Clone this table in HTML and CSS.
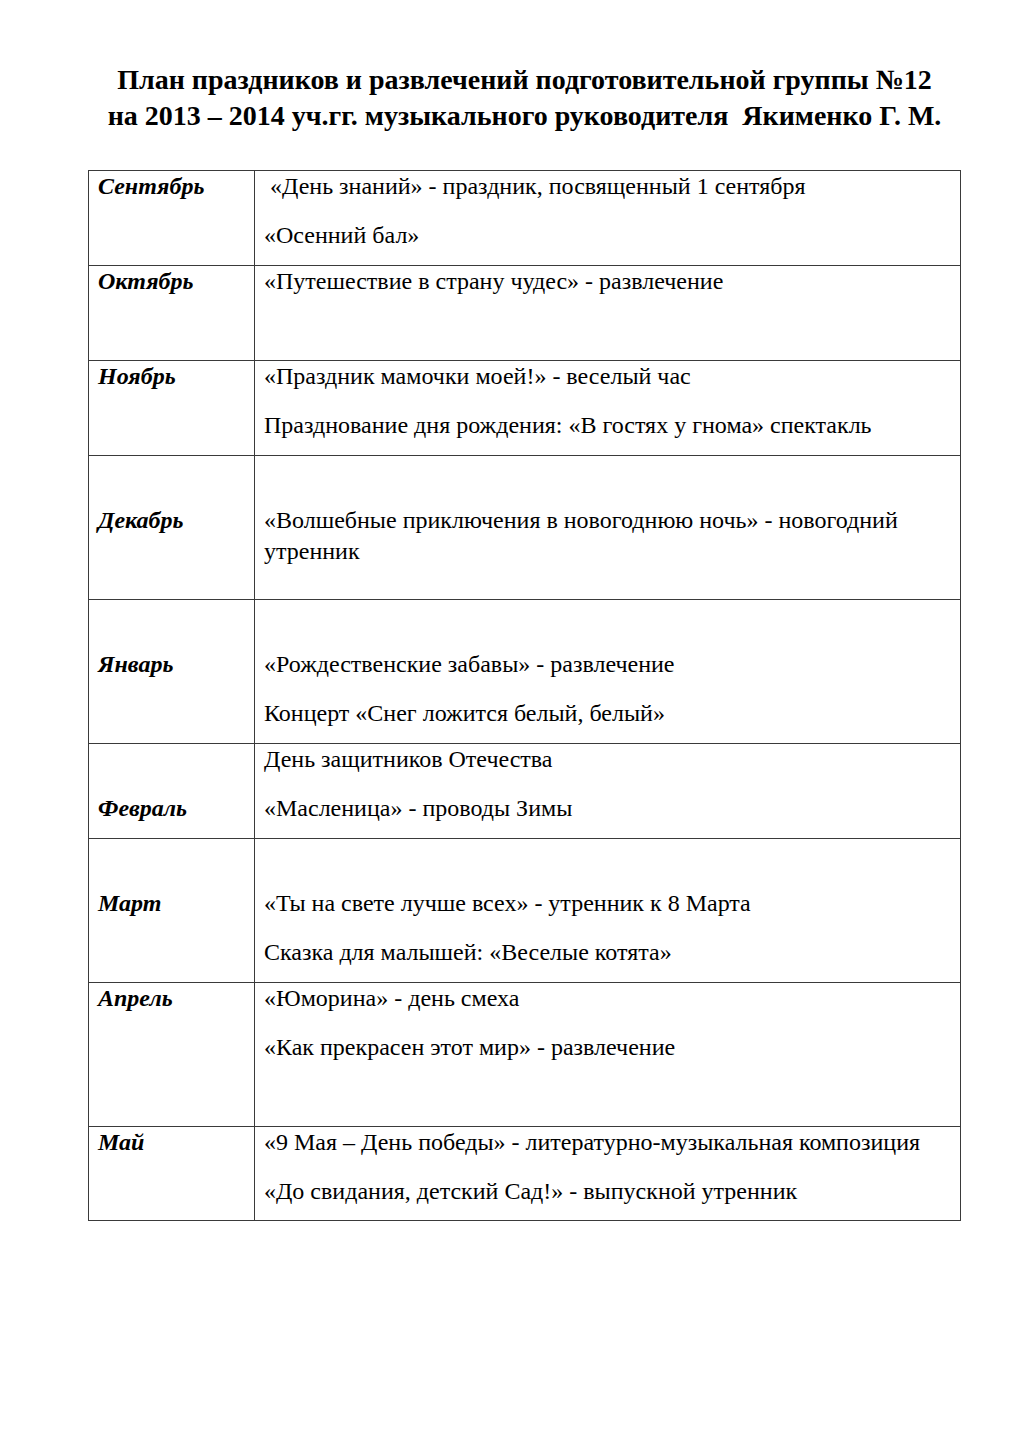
FILE: index.html
```html
<!DOCTYPE html>
<html lang="ru">
<head>
<meta charset="utf-8">
<title>План праздников и развлечений</title>
<link rel="stylesheet" href="styles.css">
</head>
<body>
<div class="page">
  <h1 class="title">
    <span class="tline">План праздников и развлечений подготовительной группы №12</span>
    <span class="tline">на 2013 – 2014 уч.гг. музыкального руководителя &nbsp;Якименко Г. М.</span>
  </h1>
  <div class="plan">
    <div class="row h2">
      <div class="month"><p>Сентябрь</p></div>
      <div class="events"><p>&nbsp;«День знаний» - праздник, посвященный 1 сентября</p><p>«Осенний бал»</p></div>
    </div>
    <div class="row h2">
      <div class="month"><p>Октябрь</p></div>
      <div class="events"><p>«Путешествие в страну чудес» - развлечение</p></div>
    </div>
    <div class="row h2">
      <div class="month"><p>Ноябрь</p></div>
      <div class="events"><p>«Праздник мамочки моей!» - веселый час</p><p>Празднование дня рождения: «В гостях у гнома» спектакль</p></div>
    </div>
    <div class="row h3">
      <div class="month"><p class="blank">&nbsp;</p><p>Декабрь</p></div>
      <div class="events"><p class="blank">&nbsp;</p><p>«Волшебные приключения в новогоднюю ночь» - новогодний утренник</p></div>
    </div>
    <div class="row h3">
      <div class="month"><p class="blank">&nbsp;</p><p>Январь</p></div>
      <div class="events"><p class="blank">&nbsp;</p><p>«Рождественские забавы» - развлечение</p><p>Концерт «Снег ложится белый, белый»</p></div>
    </div>
    <div class="row h2">
      <div class="month"><p class="blank">&nbsp;</p><p>Февраль</p></div>
      <div class="events"><p>День защитников Отечества</p><p>«Масленица» - проводы Зимы</p></div>
    </div>
    <div class="row h3">
      <div class="month"><p class="blank">&nbsp;</p><p>Март</p></div>
      <div class="events"><p class="blank">&nbsp;</p><p>«Ты на свете лучше всех» - утренник к 8 Марта</p><p>Сказка для малышей: «Веселые котята»</p></div>
    </div>
    <div class="row h3">
      <div class="month"><p>Апрель</p></div>
      <div class="events"><p>«Юморина» - день смеха</p><p>«Как прекрасен этот мир» - развлечение</p></div>
    </div>
    <div class="row h2">
      <div class="month"><p>Май</p></div>
      <div class="events"><p>«9 Мая – День победы» - литературно-музыкальная композиция</p><p>«До свидания, детский Сад!» - выпускной утренник</p></div>
    </div>
  </div>
</div>
</body>
</html>
```

FILE: styles.css
```css
html, body {
  margin: 0;
  padding: 0;
  background: #ffffff;
}
body {
  font-family: "Liberation Serif", "Times New Roman", serif;
  color: #000000;
}
.page {
  width: 873px;
  margin-left: 88px;
  padding-top: 62px;
}
.title {
  margin: 0 0 36px 0;
  font-size: 28px;
  font-weight: bold;
  line-height: 36px;
  text-align: center;
}
.tline {
  display: block;
  white-space: nowrap;
}
.plan {
  border: 1px solid #3a3a3a;
}
.row {
  display: grid;
  grid-template-columns: 166px 1fr;
  box-sizing: border-box;
  border-bottom: 1px solid #3a3a3a;
}
.row:last-child {
  border-bottom: none;
}
.h2 { height: 95px; }
.h3 { height: 144px; }
.row:last-child.h2 { height: 93px; }
.month, .events {
  padding: 0 9px;
  font-size: 24px;
  line-height: 31px;
}
.month {
  border-right: 1px solid #3a3a3a;
  font-weight: bold;
  font-style: italic;
}
.month p, .events p {
  margin: 0 0 18px 0;
}
```
